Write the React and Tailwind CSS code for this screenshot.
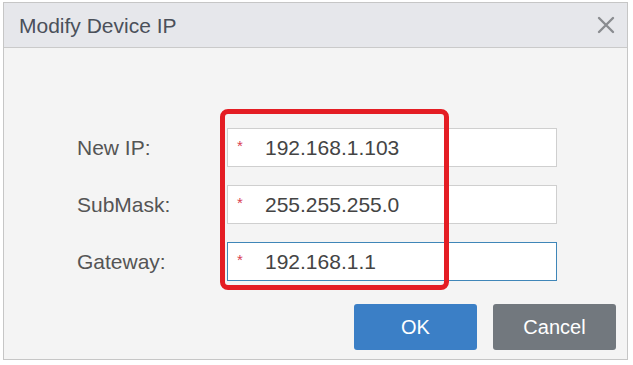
import React from 'react';

const fields = [
  { label: 'New IP:', value: '192.168.1.103' },
  { label: 'SubMask:', value: '255.255.255.0' },
  { label: 'Gateway:', value: '192.168.1.1', active: true },
];

const App = () => {
  return (
    <div className="w-[633px] h-[365px] bg-white pt-[2px] pl-[3px] font-['Liberation_Sans',Arial,sans-serif]">
      <div className="w-[625px] h-[358px] border border-[#c6c6c6] flex flex-col">
        {/* Header */}
        <div className="h-[45px] bg-[#e6e7eb] border-b border-[#cacaca] flex items-center justify-between pl-[15px] pr-[12px]">
          <span className="text-[21px] text-[#4b505a] leading-none">Modify Device IP</span>
          <svg width="18" height="18" viewBox="0 0 18 18" className="text-[#8a8c90]">
            <path d="M2 2 L16 16 M16 2 L2 16" stroke="currentColor" strokeWidth="2.4" strokeLinecap="round" />
          </svg>
        </div>

        {/* Body */}
        <div className="flex-1 bg-[#f4f4f4] relative flex flex-col pt-[80px]">
          <div className="flex flex-col gap-[18px]">
            {fields.map((f) => (
              <div key={f.label} className="flex items-center h-[39px]">
                <span className="w-[223px] pl-[73px] text-[21px] text-[#555] leading-none">{f.label}</span>
                <div
                  className={
                    f.active
                      ? 'w-[330px] h-full bg-white border-[1.5px] border-[#3f86b8] flex items-center'
                      : 'w-[330px] h-full bg-white border border-[#cfcfcf] flex items-center'
                  }
                >
                  <span className="w-[37px] pl-[9px] text-[#d94050] text-[15px] leading-none -mt-[5px]">*</span>
                  <span className="text-[21px] text-[#444] leading-none">{f.value}</span>
                </div>
              </div>
            ))}
          </div>

          {/* Buttons */}
          <div className="flex justify-end gap-[16px] pr-[11px] mt-[23px]">
            <button className="w-[123px] h-[46px] bg-[#3b7fc6] text-white text-[20px] rounded-[3px]">OK</button>
            <button className="w-[123px] h-[46px] bg-[#72787e] text-white text-[20px] rounded-[3px]">Cancel</button>
          </div>

          {/* Red highlight box */}
          <div className="absolute left-[216px] top-[61px] w-[229px] h-[181px] border-[5px] border-[#e41d24] rounded-[8px] pointer-events-none" />
        </div>
      </div>
    </div>
  );
};

export default App;
